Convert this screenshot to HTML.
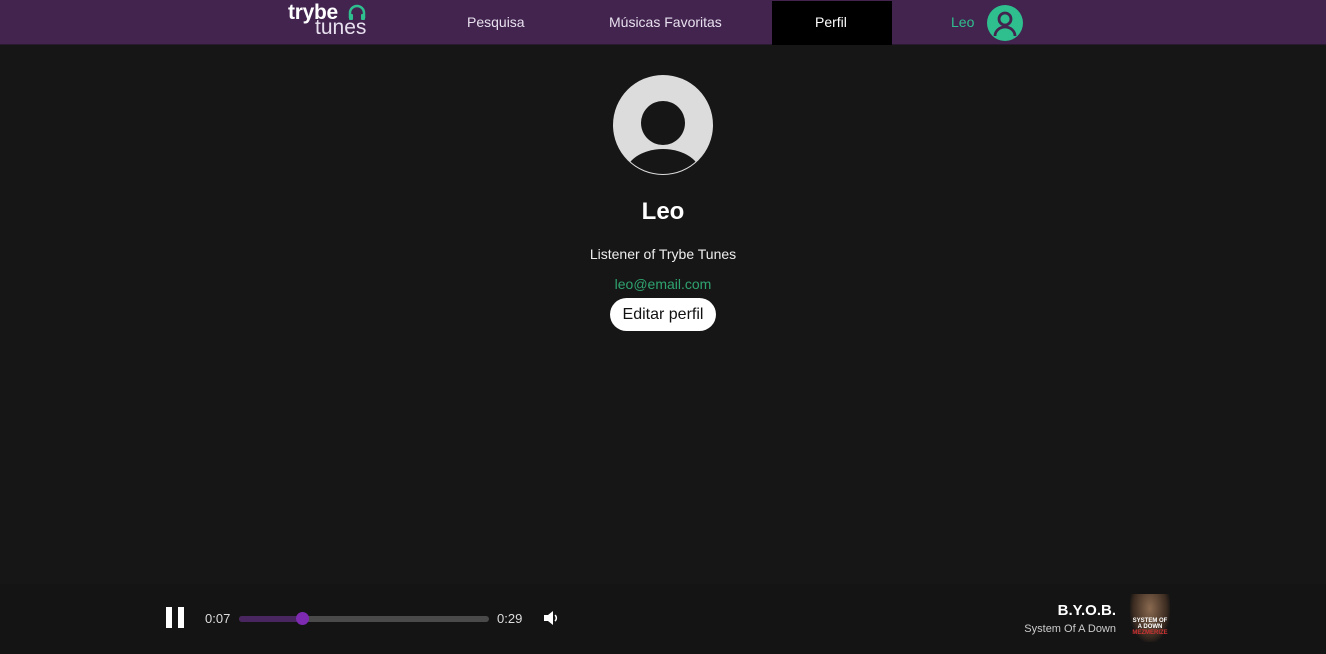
<!DOCTYPE html>
<html><head><style>
body{margin:0;width:1326px;height:654px;background:#161616;font-family:"Liberation Sans",sans-serif;position:relative;overflow:hidden;color:#fff}
.hdr{position:absolute;left:0;top:0;width:1326px;height:44px;background:#42244f;border-bottom:1px solid #2a1a30}
.t{position:absolute;font-size:14px;color:#e8e0ee}
.perf{position:absolute;left:772px;top:1px;width:120px;height:44px;background:#000}
.ft{position:absolute;left:0;top:584px;width:1326px;height:70px;background:#141414}
</style></head><body>
<div class="hdr">
 <div style="position:absolute;left:288px;top:1px;font-size:21px;font-weight:bold;color:#fff;letter-spacing:-0.3px">trybe</div>
 <svg style="position:absolute;left:347px;top:3px" width="20" height="18" viewBox="0 0 20 18"><path d="M3 15 V10 A7 7 0 0 1 17 10 V15" fill="none" stroke="#2fbf8f" stroke-width="2.5"/><rect x="2" y="11" width="4" height="6" rx="1" fill="#2fbf8f"/><rect x="14" y="11" width="4" height="6" rx="1" fill="#2fbf8f"/></svg>
 <div style="position:absolute;left:315px;top:16px;font-size:21px;color:#e8e0ee">tunes</div>
 <div class="t" style="left:467px;top:14px">Pesquisa</div>
 <div class="t" style="left:609px;top:14px">Músicas Favoritas</div>
 <div class="perf"></div>
 <div class="t" style="left:815px;top:14px;color:#fff">Perfil</div>
 <div class="t" style="left:951px;top:14px;color:#2fbf8f">Leo</div>
 <svg style="position:absolute;left:987px;top:5px" width="36" height="36" viewBox="0 0 36 36"><circle cx="18" cy="18" r="18" fill="#2fbf8f"/><circle cx="18" cy="14" r="6" fill="none" stroke="#42244f" stroke-width="2.8"/><path d="M8 31 A10 9 0 0 1 28 31" fill="none" stroke="#42244f" stroke-width="2.8"/></svg>
</div>
<svg style="position:absolute;left:613px;top:75px" width="100" height="100" viewBox="0 0 100 100"><defs><clipPath id="c"><circle cx="50" cy="50" r="49"/></clipPath></defs><circle cx="50" cy="50" r="50" fill="#dcdcdc"/><circle cx="50" cy="48" r="22" fill="#161616"/><g clip-path="url(#c)"><ellipse cx="50" cy="100" rx="38" ry="26" fill="#161616"/></g></svg>
<div style="position:absolute;left:0;width:1326px;text-align:center;top:198px;font-size:24px;font-weight:bold">Leo</div>
<div style="position:absolute;left:0;width:1326px;text-align:center;top:246px;font-size:14px;color:#eee">Listener of Trybe Tunes</div>
<div style="position:absolute;left:0;width:1326px;text-align:center;top:276px;font-size:14px;color:#2fa36f">leo@email.com</div>
<div style="position:absolute;left:610px;top:298px;width:106px;height:33px;border-radius:17px;background:#fff;color:#111;font-size:16px;text-align:center;line-height:33px">Editar perfil</div>
<div class="ft">
 <div style="position:absolute;left:166px;top:23px;width:6px;height:21px;background:#fff"></div>
 <div style="position:absolute;left:178px;top:23px;width:6px;height:21px;background:#fff"></div>
 <div style="position:absolute;left:205px;top:27px;font-size:13px;color:#ddd">0:07</div>
 <div style="position:absolute;left:239px;top:32px;width:250px;height:6px;border-radius:3px;background:#4a4a4a"></div>
 <div style="position:absolute;left:239px;top:32px;width:64px;height:6px;border-radius:3px;background:#4a2660"></div>
 <div style="position:absolute;left:296px;top:28px;width:13px;height:13px;border-radius:50%;background:#7d2ab0"></div>
 <div style="position:absolute;left:497px;top:27px;font-size:13px;color:#ddd">0:29</div>
 <svg style="position:absolute;left:543px;top:26px" width="16" height="16" viewBox="0 0 16 16"><path d="M1 5H5L10 1V15L5 11H1Z" fill="#fff"/><path d="M12 5A4 4 0 0 1 12 11" fill="none" stroke="#fff" stroke-width="1.5"/></svg>
 <div style="position:absolute;right:210px;top:18px;font-size:15px;font-weight:bold">B.Y.O.B.</div>
 <div style="position:absolute;right:210px;top:39px;font-size:11px;color:#ccc">System Of A Down</div>
 <div style="position:absolute;left:1130px;top:10px;width:40px;height:48px;background:radial-gradient(ellipse at 50% 30%,#8a6a50,#3a2a20 60%,#141414 75%)"></div>
 <div style="position:absolute;left:1130px;top:34px;width:40px;font-size:6px;font-weight:bold;color:#fff;text-align:center">SYSTEM OF A DOWN<br><span style="color:#c33">MEZMERIZE</span></div>
</div>
</body></html>
